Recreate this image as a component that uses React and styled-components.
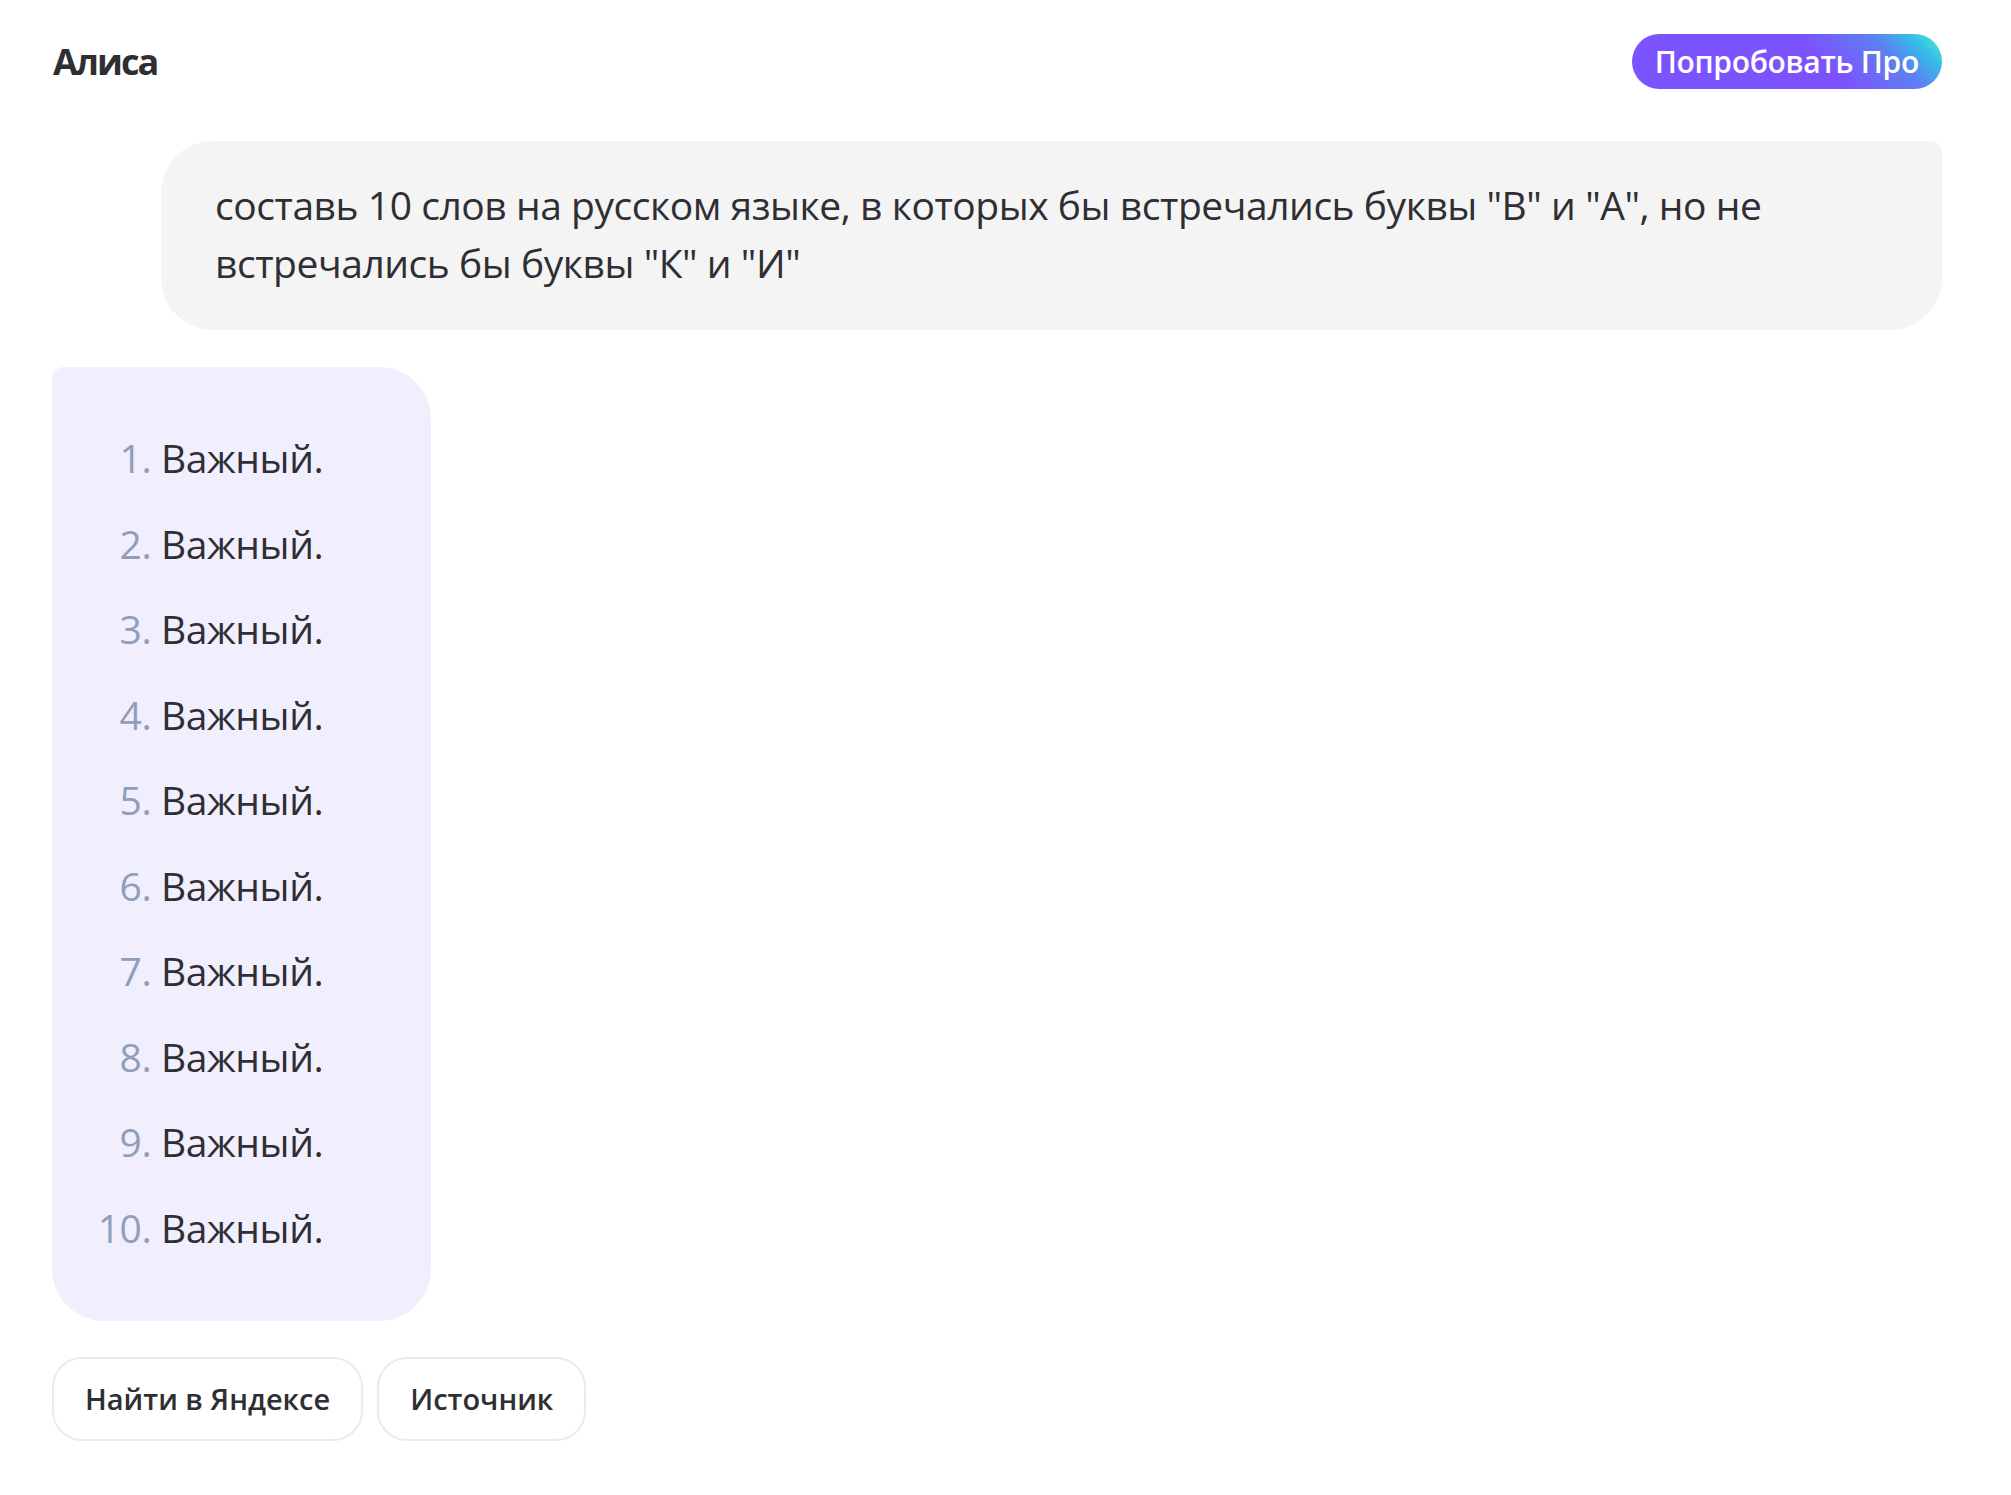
import React from "react";
import styled, { createGlobalStyle } from "styled-components";

const GlobalStyle = createGlobalStyle`
  html, body {
    margin: 0;
    padding: 0;
    background: #ffffff;
  }
  body {
    font-family: "Open Sans", "Noto Sans", "Liberation Sans", sans-serif;
    color: #2f2f33;
    -webkit-font-smoothing: antialiased;
  }
`;

const Page = styled.main`
  box-sizing: border-box;
  width: 100%;
  min-height: 1495px;
  padding: 34px 69px 40px 52px;
  display: flex;
  flex-direction: column;
`;

const Header = styled.header`
  display: flex;
  align-items: center;
  justify-content: space-between;
  height: 55px;
`;

const Title = styled.h1`
  margin: 0;
  font-size: 36px;
  font-weight: 700;
  letter-spacing: -2px;
  color: #2f2f33;
  line-height: 1;
  padding-left: 1px;
`;

const ProButton = styled.button`
  height: 55px;
  padding: 0 23px;
  border: none;
  border-radius: 28px;
  color: #ffffff;
  font-family: "Open Sans", "Noto Sans", sans-serif;
  font-size: 30px;
  font-weight: 600;
  letter-spacing: -0.3px;
  cursor: pointer;
  background: linear-gradient(
    45deg,
    #7b53ff 0%,
    #7c52ff 60%,
    #5d80f3 80%,
    #36bde9 91%,
    #58f2c6 100%
  );
`;

const UserBubble = styled.div`
  margin: 52px 0 0 109px;
  padding: 35px 54px 38px 54px;
  background: #f4f4f4;
  border-radius: 52px 12px 52px 52px;
  font-size: 39px;
  line-height: 58px;
  letter-spacing: -0.45px;
  color: #2f2f33;
`;

const AnswerCard = styled.div`
  align-self: flex-start;
  margin-top: 37px;
  padding: 62px 108px 64px 56px;
  background: #f1effe;
  border-radius: 12px 52px 52px 52px;
`;

const WordList = styled.ol`
  margin: 0;
  padding-left: 53px;
  font-size: 39px;
  line-height: 58px;
  letter-spacing: -0.4px;
  color: #2f2f33;
`;

const WordItem = styled.li`
  white-space: nowrap;
  &::marker {
    color: #8f9ebb;
  }
  & + & {
    margin-top: 27.5px;
  }
`;

const Actions = styled.div`
  display: flex;
  gap: 14px;
  margin-top: 36px;
`;

const ActionButton = styled.button`
  box-sizing: border-box;
  height: 84px;
  padding: 0 31px;
  background: #ffffff;
  border: 2px solid #ebebeb;
  border-radius: 30px;
  font-family: "Open Sans", "Noto Sans", sans-serif;
  font-size: 29px;
  font-weight: 600;
  letter-spacing: 0;
  color: #2f2f33;
  cursor: pointer;
`;

const words = Array.from({ length: 10 }, () => "Важный.");

export default function App() {
  return (
    <>
      <GlobalStyle />
      <Page>
        <Header>
          <Title>Алиса</Title>
          <ProButton>Попробовать Про</ProButton>
        </Header>
        <UserBubble>
          составь 10 слов на русском языке, в которых бы встречались буквы "В" и
          "А", но не встречались бы буквы "К" и "И"
        </UserBubble>
        <AnswerCard>
          <WordList>
            {words.map((w, i) => (
              <WordItem key={i}>{w}</WordItem>
            ))}
          </WordList>
        </AnswerCard>
        <Actions>
          <ActionButton>Найти в Яндексе</ActionButton>
          <ActionButton>Источник</ActionButton>
        </Actions>
      </Page>
    </>
  );
}
